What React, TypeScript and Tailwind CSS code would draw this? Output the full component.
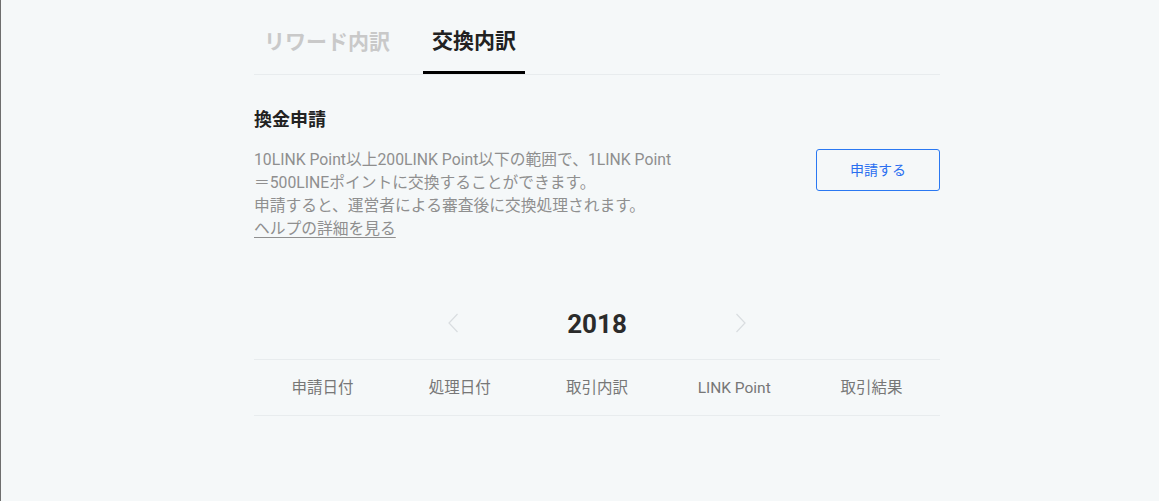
import React from "react";

const font = { fontFamily: 'Roboto, "Noto Sans CJK JP", "Noto Sans", sans-serif' };

function Chevron({ dir }: { dir: "left" | "right" }) {
  return (
    <svg width="10" height="20" viewBox="0 0 10 20" fill="none" className="block">
      {dir === "left" ? (
        <path d="M9.5 1 L1 10 L9.5 19" stroke="#d9dde0" strokeWidth="1.2" />
      ) : (
        <path d="M0.5 1 L9 10 L0.5 19" stroke="#d9dde0" strokeWidth="1.2" />
      )}
    </svg>
  );
}

export default function App() {
  const cols = ["申請日付", "処理日付", "取引内訳", "LINK Point", "取引結果"];
  return (
    <div className="min-h-screen w-full bg-[#f5f8f9] border-l border-[#6e6e6e] flex" style={font}>
      <div className="ml-[253px] w-[686px]">
        <div className="flex h-[75px] border-b border-[#e8ecee]">
          <div className="h-[74px] px-[10px] pt-[12px] flex items-center text-[21px] font-bold text-[#c9c9c9]">
            リワード内訳
          </div>
          <div className="ml-[23px] h-[74px] px-[9px] pt-[12px] flex items-center text-[21px] font-bold text-[#222] border-b-[3px] border-black">
            交換内訳
          </div>
        </div>

        <div className="mt-[33px] text-[18px] leading-[24px] font-bold text-[#222]">換金申請</div>

        <div className="mt-[16px] flex justify-between items-start">
          <div className="text-[15.75px] leading-[23px] text-[#8f8f8f]">
            10LINK Point以上200LINK Point以下の範囲で、1LINK Point
            <br />
            ＝500LINEポイントに交換することができます。
            <br />
            申請すると、運営者による審査後に交換処理されます。
            <br />
            <a className="underline underline-offset-[3px] decoration-[#8f8f8f]">ヘルプの詳細を見る</a>
          </div>
          <button className="mt-[1px] w-[124px] h-[42px] border border-[#2a78f2] rounded-[3px] text-[14px] text-[#2a6ff0] bg-transparent">
            申請する
          </button>
        </div>

        <div className="mt-[59px] h-[48px] flex justify-center items-center">
          <div className="w-[298px] flex justify-between items-center">
            <Chevron dir="left" />
            <span className="text-[26px] leading-[32px] font-bold text-[#2b2b2b] translate-y-[1px]">2018</span>
            <Chevron dir="right" />
          </div>
        </div>

        <div className="mt-[12px] h-[57px] grid grid-cols-5 items-center border-t border-b border-[#e8ecee] text-[15.5px] text-[#777] text-center">
          {cols.map((c) => (
            <div key={c} className="translate-y-[1px]">{c}</div>
          ))}
        </div>
      </div>
    </div>
  );
}
